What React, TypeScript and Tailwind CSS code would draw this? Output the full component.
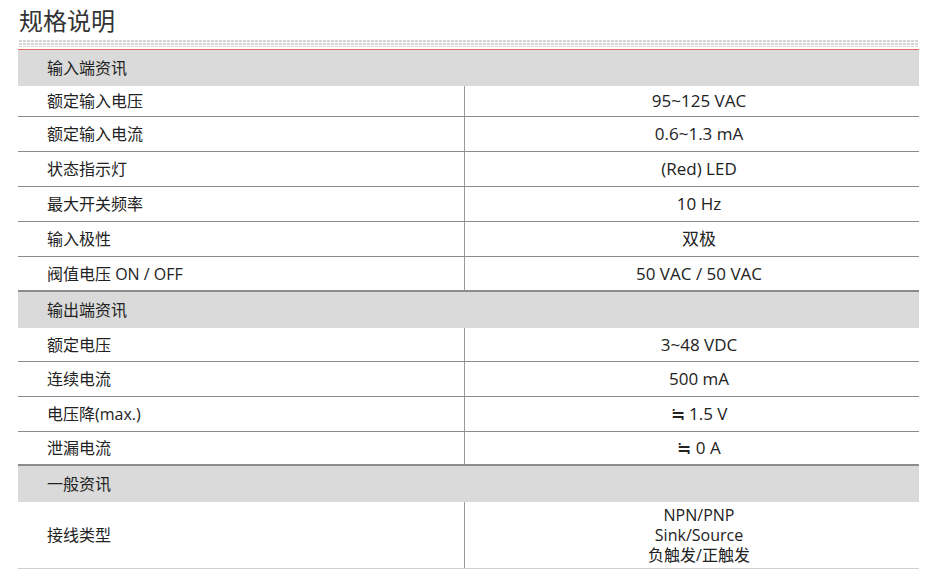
type Row = { label: string; value: string[]; h: string };
type Section = { title: string; h: string; rows: Row[] };

const sections: Section[] = [
  {
    title: "输入端资讯",
    h: "h-[36px]",
    rows: [
      { label: "额定输入电压", value: ["95~125 VAC"], h: "h-[30px]" },
      { label: "额定输入电流", value: ["0.6~1.3 mA"], h: "h-[34px]" },
      { label: "状态指示灯", value: ["(Red) LED"], h: "h-[34px]" },
      { label: "最大开关频率", value: ["10 Hz"], h: "h-[34px]" },
      { label: "输入极性", value: ["双极"], h: "h-[34px]" },
      { label: "阀值电压 ON / OFF", value: ["50 VAC / 50 VAC"], h: "h-[33px]" },
    ],
  },
  {
    title: "输出端资讯",
    h: "h-[36px]",
    rows: [
      { label: "额定电压", value: ["3~48 VDC"], h: "h-[33px]" },
      { label: "连续电流", value: ["500 mA"], h: "h-[34px]" },
      { label: "电压降(max.)", value: ["≒ 1.5 V"], h: "h-[34px]" },
      { label: "泄漏电流", value: ["≒ 0 A"], h: "h-[32px]" },
    ],
  },
  {
    title: "一般资讯",
    h: "h-[36px]",
    rows: [{ label: "接线类型", value: ["NPN/PNP", "Sink/Source", "负触发/正触发"], h: "h-[66px]" }],
  },
];

export default function App() {
  return (
    <div className="w-[940px] h-[571px] overflow-hidden bg-white pl-[18px] pr-[21px] text-[#222] font-['Open_Sans','Noto_Sans_CJK_SC',sans-serif]">
      <h1 className="pl-px pt-[5px] text-[24px] leading-[32px] text-[#333]">规格说明</h1>
      <div className="mt-[2px] h-[8px] bg-[#d4d4d4] bg-[linear-gradient(90deg,#fff_1px,transparent_1px),linear-gradient(#fff_1px,transparent_1px)] bg-[size:4px_3px]" />
      <div className="mt-[2px] h-px bg-[#e26a5e]" />
      {sections.map((section, si) => (
        <div key={section.title}>
          <div className={`${section.h} bg-[#dadada] pl-[29px] flex items-center text-[16px]`}>
            {section.title}
          </div>
          {section.rows.map((row, ri) => {
            const lastInSection = ri === section.rows.length - 1;
            const lastOverall = si === sections.length - 1;
            const border = lastOverall
              ? "border-b border-[#cfcfcf]"
              : lastInSection
                ? "border-b-2 border-[#8c8c8c]"
                : "border-b border-[#8c8c8c]";
            const multi = row.value.length > 1;
            return (
              <div key={row.label} className={`flex ${border}`}>
                <div
                  className={`w-[447px] shrink-0 pl-[29px] flex items-center text-[16px] border-r border-[#9a9a9a] ${row.h}`}
                >
                  {row.label}
                </div>
                <div
                  className={`flex-1 pl-[14px] flex flex-col items-center justify-center ${
                    multi ? "text-[16px] leading-[20px]" : "text-[17px] leading-[20px]"
                  }`}
                >
                  {row.value.map((v) => (
                    <div key={v} className="h-[20px]">
                      {v}
                    </div>
                  ))}
                </div>
              </div>
            );
          })}
        </div>
      ))}
    </div>
  );
}
